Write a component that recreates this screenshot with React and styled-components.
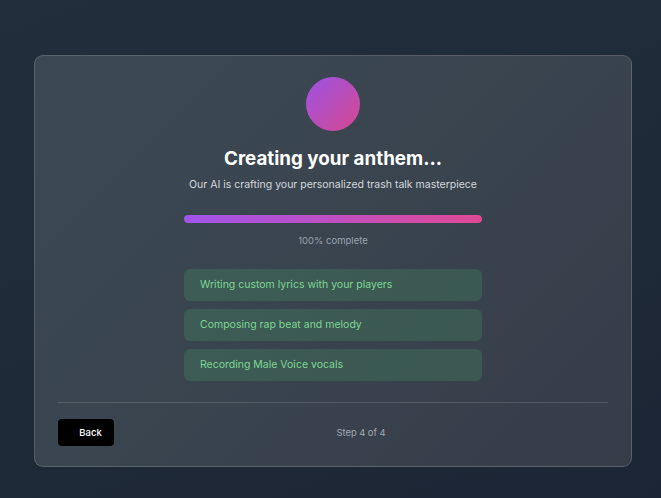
import React from "react";
import styled, { createGlobalStyle } from "styled-components";

const steps = [
  "Writing custom lyrics with your players",
  "Composing rap beat and melody",
  "Recording Male Voice vocals",
];

const App = () => {
  const progress = 100;
  return (
    <>
      <GlobalStyle />
      <Page>
        <Card>
          <Body>
            <Orb />
            <Title>Creating your anthem...</Title>
            <Subtitle>Our AI is crafting your personalized trash talk masterpiece</Subtitle>
            <Track>
              <Fill style={{ width: `${progress}%` }} />
            </Track>
            <Percent>{progress}% complete</Percent>
            <StepList>
              {steps.map((s) => (
                <StepItem key={s}>{s}</StepItem>
              ))}
            </StepList>
          </Body>
          <Footer>
            <BackButton>Back</BackButton>
            <StepCount>Step 4 of 4</StepCount>
          </Footer>
        </Card>
      </Page>
    </>
  );
};

const GlobalStyle = createGlobalStyle`
  html, body {
    margin: 0;
    padding: 0;
  }
  body {
    font-family: Inter, "Noto Sans", sans-serif;
    background: #1f2a38;
  }
`;

const Page = styled.div`
  width: 661px;
  height: 498px;
  box-sizing: border-box;
  padding: 55px 29px 0 34px;
  background: linear-gradient(160deg, #222e3c 0%, #1f2a38 60%, #1c2535 100%);
`;

const Card = styled.div`
  box-sizing: border-box;
  width: 598px;
  height: 412px;
  border: 1px solid rgba(255, 255, 255, 0.16);
  border-radius: 9px;
  background: linear-gradient(135deg, #3c4853 0%, #39444f 50%, #373c49 100%);
  padding: 21px 23px 0;
  display: flex;
  flex-direction: column;
`;

const Body = styled.div`
  display: flex;
  flex-direction: column;
  align-items: center;
  padding-bottom: 21px;
  border-bottom: 1px solid rgba(255, 255, 255, 0.14);
`;

const Orb = styled.div`
  width: 54px;
  height: 54px;
  border-radius: 50%;
  background: linear-gradient(135deg, #a855f7 0%, #ec4899 100%);
  opacity: 0.88;
`;

const Title = styled.h1`
  margin: 16px 0 0;
  font-size: 18.8px;
  line-height: 24px;
  font-weight: 700;
  color: #ffffff;
`;

const Subtitle = styled.p`
  margin: 7px 0 0;
  font-size: 10.5px;
  line-height: 14px;
  color: #d4d8de;
`;

const Track = styled.div`
  margin-top: 23px;
  width: 298px;
  height: 8px;
  border-radius: 4px;
  background: rgba(255, 255, 255, 0.12);
  overflow: hidden;
`;

const Fill = styled.div`
  height: 100%;
  border-radius: 4px;
  background: linear-gradient(90deg, #a855f7 0%, #ec4899 100%);
  opacity: 0.92;
`;

const Percent = styled.div`
  margin-top: 12px;
  font-size: 9.5px;
  line-height: 12px;
  color: #9aa3ad;
`;

const StepList = styled.div`
  margin-top: 22px;
  width: 298px;
  display: flex;
  flex-direction: column;
  gap: 8px;
`;

const StepItem = styled.div`
  height: 32px;
  box-sizing: border-box;
  padding: 0 16px 1px;
  display: flex;
  align-items: center;
  border-radius: 6px;
  background: rgba(80, 210, 110, 0.17);
  font-size: 10.5px;
  color: #7fd694;
`;

const Footer = styled.div`
  display: flex;
  align-items: center;
  padding-top: 16px;
`;

const BackButton = styled.button`
  width: 56px;
  height: 27px;
  border: none;
  border-radius: 4px;
  background: #000000;
  color: #ffffff;
  font-family: Inter, "Noto Sans", sans-serif;
  font-size: 9.5px;
  font-weight: 500;
  padding: 0 0 0 9px;
  cursor: pointer;
`;

const StepCount = styled.div`
  flex: 1;
  text-align: center;
  font-size: 9.3px;
  color: #a3aab3;
`;

export default App;
